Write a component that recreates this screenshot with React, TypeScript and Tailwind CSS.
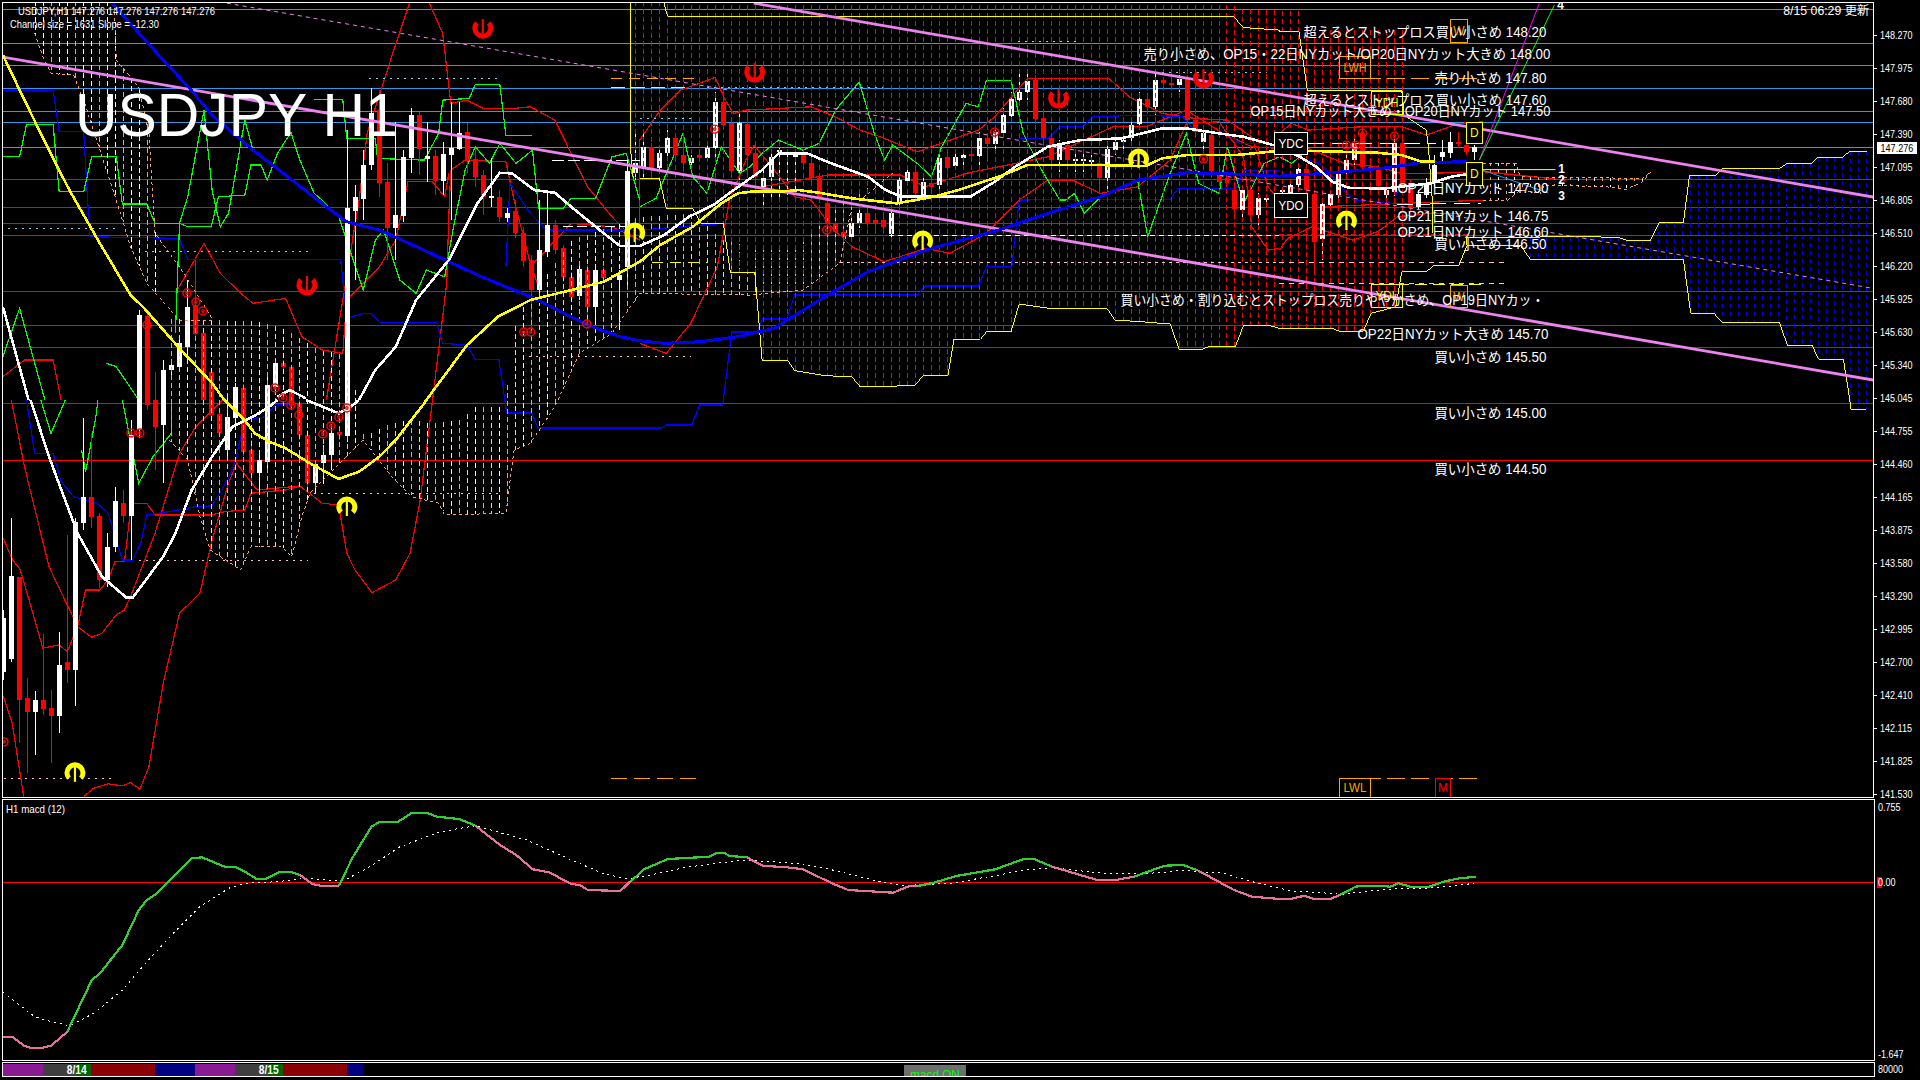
type Pt = number[]

// The chart coordinates were read off 640px wide crops, so convert them to page pixels
const tile = (ox: number, oy: number, s: string): Pt[] =>
    s.trim().split(/\s+/).map((p) => {
        const [a, b] = p.split(',').map(Number)
        return [ox + a / 2.45, oy + b / 3]
    })
const A = (s: string) => tile(0, 0, s)
const B = (s: string) => tile(640, 0, s)
const C = (s: string) => tile(1280, 0, s)
const D = (s: string) => tile(0, 400, s)
const M1 = (s: string) => tile(0, 780, s)
const M2 = (s: string) => tile(640, 780, s)
const M3 = (s: string) => tile(1280, 780, s)

const toPoints = (pts: Pt[]) => pts.map((p) => `${p[0].toFixed(1)},${p[1].toFixed(1)}`).join(' ')

function interp(pts: Pt[], x: number) {
    if (x <= pts[0][0]) return pts[0][1]
    for (let i = 1; i < pts.length; i++) {
        if (x <= pts[i][0]) {
            const [x0, y0] = pts[i - 1]
            const [x1, y1] = pts[i]
            return x1 === x0 ? y1 : y0 + ((y1 - y0) * (x - x0)) / (x1 - x0)
        }
    }
    return pts[pts.length - 1][1]
}

const RED = '#ff0000'
const BLUE = '#0000ff'
const GREEN = '#00ff00'
const YELLOW = '#ffff00'
const VIOLET = '#ee82ee'
const SKY = '#87ceeb'
const ORANGE = '#ffa500'
const SAND = '#f4a460'

const blueLevels = [9, 43, 65, 88, 111, 122]
const redLevels = [179, 207, 223, 235, 291, 325, 347, 403, 460]

const axisPrices = [
    '148.270', '147.975', '147.680', '147.390', '147.095', '146.805', '146.510', '146.220',
    '145.925', '145.630', '145.340', '145.045', '144.755', '144.460', '144.165', '143.875',
    '143.580', '143.290', '142.995', '142.700', '142.410', '142.115', '141.825', '141.530',
]

// k, colour, body top, body bottom, wick top, wick bottom
const candles: [number, string, number, number, number, number][] = [
    [0, 'w', 618, 672, 610, 680], [1, 'w', 576, 659, 518, 662], [2, 'r', 577, 700, 577, 743],
    [3, 'r', 698, 712, 678, 773], [4, 'w', 700, 712, 691, 755], [5, 'r', 700, 709, 634, 715],
    [6, 'r', 708, 716, 690, 763], [7, 'w', 665, 716, 632, 733], [8, 'r', 662, 670, 535, 683],
    [9, 'w', 522, 670, 518, 706], [10, 'w', 497, 523, 418, 530], [11, 'r', 497, 517, 433, 528],
    [12, 'r', 516, 580, 513, 588], [13, 'w', 547, 580, 533, 587], [14, 'w', 501, 547, 487, 552],
    [15, 'r', 503, 516, 490, 523], [16, 'w', 435, 516, 420, 560], [17, 'w', 315, 430, 310, 438],
    [18, 'r', 316, 405, 312, 410], [19, 'r', 400, 427, 372, 470], [20, 'w', 370, 425, 360, 483],
    [21, 'w', 365, 370, 360, 376], [22, 'w', 343, 367, 335, 372], [23, 'w', 307, 347, 280, 355],
    [24, 'r', 305, 334, 260, 340], [25, 'r', 333, 400, 330, 405], [26, 'r', 372, 415, 368, 420],
    [27, 'r', 414, 433, 410, 437], [28, 'w', 417, 450, 395, 460], [29, 'w', 387, 418, 383, 425],
    [30, 'r', 388, 452, 384, 456], [31, 'r', 450, 473, 440, 480], [32, 'w', 460, 473, 450, 490],
    [33, 'w', 385, 462, 375, 470], [34, 'w', 363, 387, 358, 392], [35, 'r', 363, 367, 360, 372],
    [36, 'r', 367, 405, 365, 410], [37, 'r', 403, 435, 400, 440], [38, 'r', 435, 483, 430, 490],
    [39, 'w', 464, 483, 460, 493], [40, 'w', 455, 463, 445, 484], [41, 'w', 433, 455, 428, 470],
    [42, 'r', 432, 435, 428, 440], [43, 'w', 208, 436, 130, 442], [44, 'w', 197, 211, 185, 280],
    [45, 'w', 165, 199, 150, 220], [46, 'w', 113, 165, 88, 170], [47, 'r', 110, 183, 90, 197],
    [48, 'r', 182, 228, 163, 260], [49, 'w', 215, 228, 122, 260], [50, 'w', 157, 216, 150, 222],
    [51, 'w', 115, 158, 108, 173], [52, 'r', 115, 149, 112, 175], [53, 'w', 156, 159, 122, 182],
    [54, 'r', 156, 181, 150, 195], [55, 'w', 154, 181, 142, 195], [56, 'w', 148, 155, 102, 220],
    [57, 'w', 133, 149, 102, 150], [58, 'r', 132, 160, 123, 173], [59, 'r', 159, 177, 148, 187],
    [60, 'r', 175, 197, 170, 215], [61, 'w', 196, 198, 158, 207], [62, 'r', 197, 217, 190, 222],
    [63, 'w', 213, 218, 208, 222], [64, 'r', 211, 233, 200, 238], [65, 'r', 233, 261, 227, 267],
    [66, 'r', 260, 290, 255, 328], [67, 'w', 250, 290, 200, 293], [68, 'w', 225, 252, 193, 257],
    [69, 'r', 225, 250, 220, 254], [70, 'r', 248, 277, 245, 282], [71, 'r', 277, 297, 272, 302],
    [72, 'w', 269, 296, 264, 300], [73, 'r', 270, 307, 265, 328], [74, 'w', 270, 307, 265, 325],
    [75, 'r', 270, 278, 267, 282], [77, 'w', 275, 280, 270, 330], [78, 'w', 171, 267, 160, 290],
    [79, 'w', 163, 173, 130, 180], [80, 'w', 147, 167, 130, 178], [81, 'r', 147, 169, 143, 177],
    [82, 'w', 153, 168, 150, 172], [83, 'w', 138, 153, 130, 157], [84, 'r', 138, 155, 135, 158],
    [85, 'r', 155, 163, 135, 172], [86, 'w', 158, 163, 155, 167], [87, 'r', 155, 158, 150, 162],
    [88, 'w', 148, 158, 142, 162], [89, 'w', 102, 148, 92, 158], [90, 'r', 102, 125, 90, 130],
    [91, 'r', 123, 171, 118, 178], [92, 'w', 123, 171, 113, 180], [93, 'r', 124, 155, 110, 173],
    [94, 'r', 153, 177, 150, 190], [95, 'w', 178, 187, 170, 207], [96, 'w', 157, 177, 150, 197],
    [97, 'w', 150, 152, 148, 200], [98, 'w', 152, 155, 150, 195], [99, 'w', 155, 157, 150, 190],
    [100, 'r', 155, 163, 150, 170], [101, 'r', 163, 178, 160, 182], [102, 'r', 178, 197, 175, 203],
    [103, 'r', 203, 224, 195, 228], [104, 'r', 223, 232, 220, 235], [105, 'r', 232, 237, 228, 240],
    [106, 'w', 223, 237, 215, 240], [107, 'w', 213, 223, 205, 228], [108, 'r', 213, 223, 210, 228],
    [109, 'r', 220, 224, 215, 230], [110, 'r', 220, 227, 212, 232], [111, 'w', 213, 234, 208, 237],
    [112, 'w', 180, 203, 175, 208], [113, 'w', 172, 181, 165, 185], [114, 'r', 172, 193, 168, 197],
    [115, 'w', 182, 195, 178, 200], [116, 'r', 183, 187, 178, 190], [117, 'w', 158, 185, 155, 195],
    [118, 'r', 157, 168, 150, 172], [119, 'w', 157, 166, 152, 170], [120, 'w', 155, 158, 150, 168],
    [121, 'r', 154, 156, 140, 158], [122, 'w', 138, 156, 132, 170], [123, 'r', 138, 144, 135, 160],
    [124, 'w', 132, 144, 125, 150], [125, 'w', 115, 133, 108, 137], [126, 'w', 99, 116, 92, 120],
    [127, 'w', 92, 100, 72, 105], [128, 'w', 81, 92, 72, 100], [129, 'r', 80, 119, 75, 124],
    [130, 'r', 118, 138, 112, 142], [131, 'r', 138, 160, 134, 165], [132, 'w', 145, 160, 140, 172],
    [133, 'r', 145, 160, 142, 170], [134, 'w', 159, 161, 150, 172], [135, 'w', 159, 161, 152, 172],
    [136, 'w', 160, 162, 155, 170], [137, 'r', 163, 178, 160, 190], [138, 'w', 149, 178, 145, 190],
    [139, 'w', 142, 150, 138, 155], [140, 'w', 140, 142, 135, 150], [141, 'w', 125, 138, 120, 142],
    [142, 'w', 99, 124, 92, 130], [143, 'r', 99, 107, 95, 112], [144, 'w', 80, 107, 73, 115],
    [145, 'r', 80, 83, 78, 86], [146, 'r', 83, 85, 80, 88], [147, 'w', 79, 85, 75, 92],
    [148, 'r', 79, 120, 75, 125], [149, 'r', 120, 132, 116, 136], [150, 'w', 133, 142, 125, 150],
    [151, 'r', 135, 171, 130, 175], [152, 'r', 172, 182, 168, 186], [153, 'r', 178, 183, 175, 187],
    [154, 'r', 190, 209, 185, 213], [155, 'w', 190, 210, 186, 217], [156, 'r', 190, 215, 186, 219],
    [157, 'w', 198, 215, 193, 225], [158, 'w', 198, 200, 195, 203], [160, 'w', 190, 192, 187, 195],
    [161, 'w', 185, 197, 180, 201], [162, 'w', 169, 185, 164, 190], [163, 'r', 169, 190, 165, 193],
    [164, 'r', 194, 242, 190, 273], [165, 'w', 204, 239, 200, 260], [166, 'w', 194, 205, 190, 210],
    [167, 'w', 174, 195, 168, 198], [168, 'w', 160, 170, 155, 175], [169, 'w', 143, 160, 138, 165],
    [170, 'r', 133, 167, 128, 170], [171, 'r', 167, 170, 163, 173], [172, 'r', 169, 186, 165, 190],
    [173, 'w', 190, 195, 185, 198], [174, 'w', 143, 192, 138, 196], [175, 'r', 143, 183, 138, 187],
    [176, 'r', 183, 207, 180, 212], [177, 'w', 194, 207, 190, 210], [178, 'w', 183, 195, 178, 198],
    [179, 'w', 165, 183, 155, 187], [180, 'w', 152, 157, 140, 162], [181, 'w', 142, 153, 132, 158],
    [182, 'r', 142, 144, 132, 148], [183, 'r', 145, 152, 142, 155], [184, 'w', 147, 152, 145, 160],
]

// Ichimoku cloud edges
const redTop = [...A('1540,3 1568,3'), ...B('60,3 68,16 1455,16 1478,27 1568,30'), ...C('0,32 48,32 68,90 300,91')]
const redBottom = [
    ...B('0,535 48,535 65,625 130,625 150,670 205,670 222,817 282,817 300,1080 362,1080 380,1112 455,1127 520,1130 540,1160 600,1160 675,1155 695,1127 755,1127 770,1018 835,1018 850,995 910,995 930,912 1005,925 1145,925 1165,960 1230,965 1300,972 1322,1047 1380,1047 1395,1040 1460,1040 1480,975 1540,975 1568,985'),
    ...C('0,985 130,985 145,993 205,993 225,940 285,920 300,815'),
]
const yellowLeft = A('1545,3 1545,440 1552,535')
const yellowTopRed = [...B('58,3 68,48 1455,48 1478,82 1568,90'), ...C('0,95 48,95 68,270 300,272 305,345 360,390 365,440 375,610 375,700')]
const yellowBottomRed = [
    ...B('0,535 48,535 65,625 130,625 150,670 205,670 222,817 282,817 300,1080 362,1080 380,1112 455,1127 520,1130 540,1160 600,1160 675,1155 695,1127 755,1127 770,1018 835,1018 850,995 910,995 930,912 1005,925 1145,925 1165,960 1230,965 1300,972 1322,1047 1380,1047 1395,1040 1460,1040 1480,975 1540,975 1568,985'),
    ...C('0,985 130,985 145,993 205,993 225,940 285,920 300,815 360,815 380,795 440,795 460,735 590,735 615,778 990,778 1008,940 1065,940 1085,967 1225,967 1245,1036 1305,1036 1322,1078 1382,1078 1398,1200'),
    ...tile(1280, 400, '1398,0 1400,28 1438,28'),
]
const yellowTopBlue = C('458,735 458,712 760,710 830,712 850,720 910,720 930,668 990,668 1005,525 1070,525 1085,505 1225,505 1245,490 1305,490 1320,472 1380,472 1398,453 1440,453')
const blueCloudBottom = [...C('590,735 615,778 990,778 1008,940 1065,940 1085,967 1225,967 1245,1036 1305,1036 1322,1078 1382,1078 1398,1200'), ...tile(1280, 400, '1400,28 1438,28')]

const duskTop = A('85,3 280,3 285,180 340,260 365,400 380,700 440,800 520,955')
const duskBottom = A('85,100 105,170 125,220 180,225 205,300 285,600 320,740 360,850 440,960 520,960')
const sandTop = [
    ...A('360,955 520,960 640,965 700,990 780,1050 830,1060 880,1200'),
    ...D('890,110 950,75 1000,60 1060,70 1130,60 1160,20 1235,20'),
    ...A('1265,950 1400,720 1568,650'),
    ...B('0,650 130,640 200,720 280,740 380,740 500,600 620,520'),
]
const sandBottom = [
    ...D('415,120 460,180 490,350 515,450 590,510 615,440 690,440 715,470 740,350 760,280 890,120 915,160 960,230 1010,290 1075,310 1090,345 1240,340 1260,150 1300,130 1360,20'),
    ...A('1420,1060 1500,1000 1568,880'),
    ...B('0,880 270,885 400,870 490,790 520,620 620,520'),
]
const tailTop = C('500,490 580,490 590,530 890,535 910,515')
const tailBottom = C('500,600 560,600 590,570 640,580 650,555 800,560 850,568 890,545 910,515')

const thinRed: Pt[][] = [
    A('1005,3 960,170 900,400 880,600 840,900 800,1200'),
    A('1050,3 1085,100 1105,310 1145,300 1185,325 1260,325 1300,320 1360,360 1440,560 1500,650 1540,700 1568,720'),
    D('28,0 60,200 120,500 190,680 225,712 250,700 285,645 305,630 320,590 380,400 440,160 480,80 545,0'),
    D('8,890 30,970 58,1190'),
    [...D('205,1190 230,1165 265,1152 300,1158 320,1148 343,1168 365,1100 400,850 440,640 490,580 520,420 560,250 580,190 630,270 735,258 790,310 830,315 850,460 870,510 912,578 970,540 1005,460 1030,300 1060,0'), ...A('1060,1200 1095,850 1100,650 1105,510 1140,480 1240,485 1260,600 1300,790 1320,860')],
    A('7,1130 60,1080 130,1080 150,1200'),
    A('430,880 500,730 540,820 590,880 620,910 700,895 740,1010 790,1050 840,1060 850,900 930,800 970,720 1000,545 1060,545 1090,590 1100,520'),
    D('8,415 30,478 50,510 105,745 145,735 165,755 190,680 210,570 245,570 265,540 282,485 305,485 322,310 360,310 380,345 520,345 550,335 600,330 615,280 700,270 735,258'),
    [...A('1300,800 1400,670 1500,680 1568,720'), ...B('0,420 50,330 100,270 185,232 210,300 230,340 260,330 420,320 480,350 540,390 590,410 680,455 830,390 870,350 950,235 1150,235 1200,290 1280,340 1360,355 1440,360 1500,410 1540,560 1568,600')],
    B('0,1030 65,1060 125,970 190,800 220,600 260,480 280,435 330,510 380,590 420,600 470,680 520,740 600,785 700,745 760,760 850,700 930,600 1000,540 1060,540 1130,580 1220,560 1300,480 1340,370 1420,365 1480,470 1500,680 1540,750 1568,745'),
    B('300,560 460,525 640,525 700,560 800,520 1000,470 1160,380 1240,380 1340,330 1430,400 1500,440 1568,445'),
    C('0,400 30,370 70,390 200,380 300,380 360,405 440,370 500,365'),
    C('0,750 20,715 80,680 180,720 240,695 290,650 370,640 450,640'),
    C('100,620 500,600'),
    C('70,445 160,490 240,500 300,520 360,520 500,515 700,540'),
]

const thinBlue: Pt[][] = [
    A('7,270 130,270 145,393 205,393 220,710 440,715 460,778 835,778 850,955 890,940 910,940 930,967 1070,967 1085,1030 1145,1035 1165,1078 1225,1078'),
    [
        [499, 359], [507, 413], [532, 413], [538, 428], [662, 428], [667, 425], [692, 425], [700, 405], [723, 405],
        [732, 332], [757, 332], [763, 319], [787, 319], [795, 295],
        ...B('680,885 700,858 830,858 850,800 912,800 930,600 1040,598 1300,598 1320,565 1460,565 1480,512 1568,512'),
    ],
    D('65,0 85,160 130,160 150,245 180,290 240,310 265,340 300,480 325,480 345,430 360,345 415,335 480,320 520,318 560,235 575,190 600,60 650,50 675,15 720,12'),
    A('1240,800 1250,550 1300,640 1340,690 1540,690'),
    B('0,690 205,670'),
    B('930,415 1000,415 1030,380 1085,380 1110,350 1230,345 1330,350 1360,390 1440,400 1470,430 1530,430'),
    C('70,480 100,490 180,600 280,610 300,530'),
]

const thinGreen: Pt[][] = [
    A('7,470 48,470 65,372 130,372 145,575 205,575 225,468 285,468 300,612 360,612 380,670 440,670 460,680 518,680 535,590 600,585 615,495 640,495 655,540 680,460 713,397 735,480 770,580 785,595 830,650 890,870 920,720 940,690 980,840 1020,880 1045,810 1090,830 1110,690 1140,510 1165,440 1200,490 1225,430 1265,490 1305,450 1320,625 1380,625 1400,595 1460,595 1500,470 1535,460 1568,600'),
    A('430,1000 440,670 460,590 500,330 520,570 540,680 560,640 600,360 620,450'),
    A('770,298 840,298 850,415 920,415 925,475 985,478 1040,480 1075,400 1085,300 1150,295 1165,253 1225,253 1240,405 1305,405'),
    A('7,1070 48,925 110,1200'),
    A('260,1090 285,1100 340,1200'),
    D('100,0 125,100 160,0'),
    D('200,150 210,215 235,50 240,0'),
    D('300,0 340,250 375,170 420,100 420,0'),
    B('0,620 40,595 106,400 130,530 165,580 200,440 245,520 270,500 300,460 340,420 400,450 440,430 480,330 538,245 575,400 600,480 620,435 680,490 715,530 740,440 800,310 830,320 850,240 910,240 940,400 985,510 1030,600 1045,600 1065,580 1090,640 1130,590 1220,540 1245,710 1300,520 1340,400 1370,550 1420,580 1440,440 1480,610 1530,490 1568,470'),
    C('0,470 30,490 70,450 90,450'),
]

const thickYellow = [
    A('7,165 60,300 120,450 170,570 240,720 320,885 350,920 440,1045 520,1150 550,1200'),
    D('550,0 595,55 625,100 660,125 700,145 760,190 830,237 880,215 930,170 970,120 1040,10 1045,0'),
    [...A('1045,1200 1145,1035 1220,950 1300,900 1400,870 1480,845 1568,785'), ...B('0,785 50,735 130,680 200,610 240,580 270,575 340,575 390,570 440,578 520,595 630,610 720,590 780,570 880,530 950,495 1130,495 1240,498 1280,475 1340,465 1460,465 1568,452'), ...C('0,452 70,452 240,458 300,465 350,485 380,485')],
]
const thickBlue = [...A('270,3 400,180 465,265 520,345 620,450 700,525 800,620 850,665 930,690 1030,745 1180,830 1310,895 1440,975 1520,1010 1568,1022'), ...B('0,1022 60,1030 150,1025 240,1010 330,985 460,885 560,815 700,750 880,690 1000,640 1130,590 1220,540 1340,518 1420,520 1568,528'), ...C('0,528 110,520 250,505 350,487 460,485')]
const thickWhite = [
    A('7,920 70,1200'),
    D('75,0 120,170 190,400 250,530 310,593 325,593 400,470 430,400 470,270 520,170 570,80 620,50 660,20 680,0'),
    A('680,1190 710,1170 750,1195'),
    D('750,0 830,40 860,20 880,0'),
    [...A('880,1200 920,1110 970,1040 1020,900 1100,780 1170,610 1225,518 1255,520 1310,570 1360,578 1400,620 1470,690 1520,738 1568,738'), ...B('0,738 60,705 120,650 180,615 230,570 300,510 340,460 410,460 470,490 560,530 600,568 640,590 810,590 870,545 920,500 1000,440 1080,420 1180,415 1280,385 1340,385 1420,400 1480,410 1568,440'), ...C('0,440 50,470 90,500 130,545 170,563 240,565 260,565 370,550 420,530 460,522')],
]

// x1, x2, y, colour, dash
const dashes: [number, number, number, string, string][] = [
    [369, 500, 78, SKY, '2 5'], [8, 116, 228, SKY, '2 5'], [145, 308, 251, SKY, '2 5'],
    [529, 691, 356, '#ffc0cb', '2 5'], [314, 502, 493, '#ffc0cb', '2 5'], [139, 308, 560, '#ffc0cb', '2 5'],
    [4, 116, 778, '#ffc0cb', '2 5'], [1018, 1076, 41, SKY, '2 5'], [640, 691, 118, SKY, '2 5'],
    [707, 883, 87, SKY, '2 5'], [1162, 1268, 72, SKY, '2 5'], [611, 701, 78, ORANGE, '11 7'],
    [611, 685, 87, YELLOW, '14 6'], [889, 1280, 235, '#ffffff', '5 4'], [1280, 1470, 234, RED, '5 3'],
    [840, 1280, 262, '#ffc0cb', '3 4'], [1280, 1506, 262, '#ffc0cb', '5 5'], [652, 707, 262, YELLOW, '11 7'],
    [1280, 1506, 283, '#ffc0cb', '5 5'], [1398, 1483, 284, YELLOW, '12 6'], [611, 701, 778, ORANGE, '16 7'],
    [1340, 1483, 778, ORANGE, '18 6'], [1340, 1483, 78, ORANGE, '18 6'], [1309, 1437, 143, '#ffffff', '16 8'],
    [1431, 1482, 203, '#ffffff', '16 8'], [1398, 1431, 204, '#ffffff', '16 8'], [552, 640, 160, '#ffffff', '12 4'],
    [563, 640, 226, '#ffffff', '10 4'],
]

const redShoes = [[483, 28], [307, 285], [755, 72], [1059, 98], [1204, 78]]
const yellowShoes = [[75, 773], [347, 507], [923, 241], [1139, 159], [1347, 221], [635, 233]]
const rings = [
    [187, 293], [196, 302], [203, 311], [147, 325], [275, 388], [283, 398], [524, 332], [531, 332],
    [587, 324], [131, 433], [140, 433], [323, 434], [331, 426], [339, 417], [347, 408], [291, 405],
    [299, 415], [4, 742], [715, 129], [827, 230], [995, 132], [1204, 159], [1347, 145], [1356, 145],
    [1363, 133], [1395, 136],
]

// text, left, right, baseline
const notes: [string, number, number, number][] = [
    ['超えるとストップロス買い小さめ 148.20', 1304, 1547, 37],
    ['売り小さめ、OP15・22日NYカット/OP20日NYカット大きめ 148.00', 1144, 1551, 59],
    ['売り小さめ 147.80', 1435, 1547, 83],
    ['超えるとストップロス買い小さめ 147.60', 1304, 1547, 105],
    ['OP15日NYカット大きめ・OP20日NYカット 147.50', 1251, 1551, 116],
    ['OP21日NYカット 147.00', 1398, 1549, 193],
    ['OP21日NYカット 146.75', 1398, 1549, 221],
    ['OP21日NYカット 146.60', 1398, 1549, 237],
    ['買い小さめ 146.50', 1435, 1547, 249],
    ['買い小さめ・割り込むとストップロス売りややかさめ、OP19日NYカッ・', 1121, 1545, 305],
    ['OP22日NYカット大きめ 145.70', 1358, 1549, 339],
    ['買い小さめ 145.50', 1435, 1547, 362],
    ['買い小さめ 145.00', 1435, 1547, 418],
    ['買い小さめ 144.50', 1435, 1547, 474],
]

// text, x, y, w, h, colour
const boxes: [string, number, number, number, number, string][] = [
    ['W', 1451, 19, 17, 23, ORANGE], ['LWH', 1340, 56, 31, 22, ORANGE], ['YDH', 1372, 91, 31, 23, YELLOW],
    ['D', 1467, 122, 16, 21, YELLOW], ['D', 1467, 162, 16, 23, YELLOW], ['YDC', 1275, 132, 33, 22, '#ffffff'],
    ['YDO', 1275, 193, 33, 24, '#ffffff'], ['YDL', 1372, 284, 31, 23, YELLOW], ['W', 1451, 285, 17, 22, ORANGE],
    ['LWL', 1340, 778, 31, 19, ORANGE], ['M', 1436, 778, 15, 19, RED],
]

const macdPink = [
    M1('7,770 30,770 60,798 75,803 105,803 125,797 165,755'),
    M1('735,285 765,312 785,317 830,317'),
    M1('1165,137 1225,195 1265,225 1305,268 1345,277 1400,312 1420,315 1440,330 1520,333 1545,303'),
    M2('262,232 300,257 360,262 400,268 470,310 510,330 620,338 660,318 680,318'),
    M2('1010,260 1120,300 1165,300 1210,290'),
    [...M2('1365,270 1455,330 1500,350 1568,357'), ...M3('0,357 25,357 60,347 80,356 125,356 147,345')],
]
const macdGreen = [
    M1('165,755 225,600 245,580 300,495 340,390 360,360 385,340 470,235 495,232 550,260 575,260 600,275 630,298 650,298 685,275 710,275 735,285'),
    M1('830,317 865,230 910,140 930,125 975,125 1010,98 1045,98 1070,110 1125,117 1165,137'),
    [...M1('1545,303 1568,280'), ...M2('0,280 10,268 68,237 170,230 190,218 205,218 220,228 262,232')],
    M2('680,318 720,308 775,288 870,268 940,237 965,237 1010,260'),
    M2('1210,290 1285,257 1330,255 1365,270'),
    M3('147,345 185,320 210,317 245,317 270,320 290,310 320,320 365,320 400,305 440,295 480,290'),
]
const macdSignal = [
    ...M1('7,637 85,710 110,720 170,737 230,700 300,630 360,545 440,440 490,380 560,325 600,310 680,305 750,295 840,303 900,265 980,200 1080,155 1165,137 1290,180 1400,240 1480,282 1540,297 1568,290'),
    ...M2('0,292 100,265 170,252 260,240 400,252 480,272 580,303 640,317 760,310 880,285 940,270 1010,263 1150,282 1290,278 1320,270 1430,280 1500,305 1568,325'),
    ...M3('0,325 30,333 100,338 150,343 230,332 290,325 360,325 425,318 475,310'),
]

function Path({ pts, color, w = 1, dash }: { pts: Pt[]; color: string; w?: number; dash?: string }) {
    return <polyline points={toPoints(pts)} fill="none" stroke={color} strokeWidth={w} strokeDasharray={dash} shapeRendering="crispEdges" />
}

function Hatch({ top, bottom, from, to, colors, dash = '5 3' }: { top: Pt[]; bottom: Pt[]; from: number; to: number; colors: string[]; dash?: string }) {
    const xs: number[] = []
    for (let x = from; x <= to; x += 8) xs.push(x)
    return (
        <g shapeRendering="crispEdges" strokeDasharray={dash}>
            {xs.map((x, i) => {
                const y1 = interp(top, x)
                const y2 = interp(bottom, x)
                if (y2 <= y1) return null
                return <line key={x} x1={x + 0.5} x2={x + 0.5} y1={y1} y2={y2} stroke={colors[i % colors.length]} />
            })}
        </g>
    )
}

// The arrow-in-horseshoe marks, red ones open upward and yellow ones downward
function Shoe({ x, y, color, flip }: { x: number; y: number; color: string; flip?: boolean }) {
    return (
        <g transform={`translate(${x} ${y}) scale(1 ${flip ? -1 : 1})`} fill="none" stroke={color}>
            <path d="M-6,-5.3 A8,8 0 1,0 6,-5.3" strokeWidth={5} />
            <path d="M0,10 L0,-9" strokeWidth={2.2} />
        </g>
    )
}

function PriceChart() {
    return (
        <svg viewBox="3 3 1871 794" className="block w-full h-full font-['Liberation_Sans','Noto_Sans_CJK_JP',sans-serif]">
            {/* Level lines */}
            <g shapeRendering="crispEdges">
                {blueLevels.map((y) => <line key={y} x1={3} x2={1874} y1={y + 0.5} y2={y + 0.5} stroke="#3399e6" />)}
                <line x1={3} x2={1874} y1={147.5} y2={147.5} stroke="#778899" />
                {redLevels.map((y) => <line key={y} x1={3} x2={1874} y1={y + 0.5} y2={y + 0.5} stroke={RED} />)}
            </g>

            {thinRed.map((p, i) => <Path key={i} pts={p} color={RED} w={1.2} />)}
            {thinBlue.map((p, i) => <Path key={i} pts={p} color={BLUE} w={1.2} />)}
            {thinGreen.map((p, i) => <Path key={i} pts={p} color={GREEN} w={1.2} />)}

            {/* Candles */}
            <g shapeRendering="crispEdges">
                {candles.map(([k, c, top, bot, wt, wb]) => {
                    const x = 3 + 8 * k
                    const fill = c === 'r' ? RED : '#ffffff'
                    return (
                        <g key={k} fill={fill}>
                            <rect x={x} y={wt} width={1} height={wb - wt} />
                            <rect x={x - 2} y={top} width={5} height={Math.max(bot - top, 1)} />
                        </g>
                    )
                })}
            </g>

            {/* Cloud hatching */}
            <Hatch top={duskTop} bottom={duskBottom} from={35} to={155} colors={['#ffffff', '#ffffff', SAND]} />
            <Hatch top={sandTop} bottom={sandBottom} from={171} to={627} colors={[SAND, '#ffc9a0', '#ffe4e1']} />
            <Hatch top={sandTop} bottom={sandBottom} from={635} to={891} colors={[SAND, '#ffc9a0']} />
            <Hatch top={redTop} bottom={redBottom} from={635} to={1403} colors={[RED]} />
            <Hatch top={yellowTopBlue} bottom={blueCloudBottom} from={1531} to={1867} colors={[BLUE]} dash="4 4" />
            <Hatch top={tailTop} bottom={tailBottom} from={1491} to={1651} colors={[SAND, '#ffffff']} dash="3 4" />
            <Path pts={duskTop} color={SAND} dash="3 3" />
            <Path pts={duskBottom} color={SAND} dash="3 3" />
            <Path pts={sandBottom} color={SAND} dash="3 3" />
            <Path pts={tailTop} color={SAND} dash="3 3" />
            <Path pts={tailBottom} color={SAND} dash="3 3" />

            <Path pts={yellowLeft} color={YELLOW} />
            <Path pts={yellowTopRed} color={YELLOW} />
            <Path pts={yellowBottomRed} color={YELLOW} />
            <Path pts={yellowTopBlue} color={YELLOW} />

            {dashes.map(([x1, x2, y, color, dash], i) => (
                <line key={i} x1={x1} x2={x2} y1={y + 0.5} y2={y + 0.5} stroke={color} strokeDasharray={dash} shapeRendering="crispEdges" />
            ))}

            {/* Channel */}
            <line x1={3} x2={1874} y1={57} y2={380} stroke={VIOLET} strokeWidth={2.8} />
            <line x1={754} x2={1874} y1={3} y2={197} stroke={VIOLET} strokeWidth={2.8} />
            <line x1={227} x2={1872} y1={3} y2={288} stroke={VIOLET} strokeDasharray="4 4" />

            {/* Moving averages */}
            <Path pts={thickBlue} color={BLUE} w={3} />
            {thickWhite.map((p, i) => <Path key={i} pts={p} color="#ffffff" w={2.6} />)}
            {thickYellow.map((p, i) => <Path key={i} pts={p} color={YELLOW} w={2.6} />)}

            {/* Pivot projection */}
            <line x1={1483} x2={1556} y1={169.5} y2={169.5} stroke={YELLOW} />
            <line x1={1483} x2={1566} y1={171} y2={180} stroke={RED} />
            <line x1={1483} x2={1549} y1={170} y2={193} stroke="#3399e6" />
            <line x1={1480} x2={1540} y1={160} y2={3} stroke="#ff00ff" />
            <line x1={1480} x2={1555} y1={160} y2={5} stroke={GREEN} />

            {rings.map(([x, y]) => (
                <g key={`${x}-${y}`} fill="none" stroke={RED} strokeWidth={1.4}>
                    <circle cx={x} cy={y} r={4} />
                    <circle cx={x} cy={y} r={1.2} />
                </g>
            ))}
            {redShoes.map(([x, y]) => <Shoe key={x} x={x} y={y} color={RED} />)}
            {yellowShoes.map(([x, y]) => <Shoe key={x} x={x} y={y} color={YELLOW} flip />)}

            {boxes.map(([label, x, y, w, h, color]) => (
                <g key={`${label}-${y}`}>
                    <rect x={x + 0.5} y={y + 0.5} width={w} height={h} fill={label === 'W' || label === 'LWH' || label === 'YDH' || label === 'YDL' ? 'none' : '#000000'} stroke={color} shapeRendering="crispEdges" />
                    <text x={x + w / 2} y={y + h / 2 + 4.5} textAnchor="middle" fontSize={12} fill={color} textLength={label.length > 1 ? w - 8 : undefined} lengthAdjust="spacingAndGlyphs">{label}</text>
                </g>
            ))}

            {/* Order notes */}
            {notes.map(([label, x1, x2, y]) => (
                <text key={label} x={x1} y={y} fontSize={14} fill="#ffffff" textLength={x2 - x1} lengthAdjust="spacingAndGlyphs">{label}</text>
            ))}

            <text x={1559} y={173} fontSize={12} fontWeight={700} fill="#ffffff">1</text>
            <text x={1559} y={184} fontSize={12} fontWeight={700} fill="#ffffff">2</text>
            <text x={1559} y={200} fontSize={12} fontWeight={700} fill="#ffffff">3</text>
            <text x={1558} y={9} fontSize={12} fontWeight={700} fill="#ffffff">4</text>

            <text x={75} y={136} fontSize={61} fill="#ffffff" textLength={323} lengthAdjust="spacingAndGlyphs">USDJPY H1</text>
            <text x={18} y={15} fontSize={11} fill="#ffffff" textLength={197} lengthAdjust="spacingAndGlyphs">USDJPY,H1  147.276 147.276 147.276 147.276</text>
            <text x={10} y={28} fontSize={11} fill="#ffffff" textLength={149} lengthAdjust="spacingAndGlyphs">Channel size = 1631 Slope = -12.30</text>
            <text x={1784} y={15} fontSize={12} fill="#ffffff" textLength={86} lengthAdjust="spacingAndGlyphs">8/15 06:29 更新</text>
        </svg>
    )
}

function MacdChart() {
    return (
        <svg viewBox="3 800 1871 260" className="block w-full h-full font-['Liberation_Sans',sans-serif]">
            <line x1={3} x2={1874} y1={882.5} y2={882.5} stroke={RED} shapeRendering="crispEdges" />
            <Path pts={macdSignal} color="#ffffff" dash="2 4" />
            {macdPink.map((p, i) => <Path key={i} pts={p} color="#e8709f" w={2.2} />)}
            {macdGreen.map((p, i) => <Path key={i} pts={p} color="#32cd32" w={2.2} />)}
            <text x={6} y={813} fontSize={11} fill="#ffffff" textLength={59} lengthAdjust="spacingAndGlyphs">H1  macd (12)</text>
        </svg>
    )
}

function AxisText({ children }: { children: string }) {
    return <span className="text-[11px] leading-none text-white origin-left scale-x-[0.82] whitespace-nowrap">{children}</span>
}

export default function App() {
    return (
        <div className="relative w-[1920px] h-[1080px] bg-black pt-[2px] pl-[2px] flex flex-col gap-[1px] overflow-hidden font-['Liberation_Sans',sans-serif]">
            {/* Price panel */}
            <div className="flex h-[796px]">
                <div className="w-[1873px] border border-white">
                    <PriceChart />
                </div>
                <div className="flex flex-col pt-[17px]">
                    {axisPrices.map((price) => (
                        <div key={price} className="flex items-center shrink-0 h-[33px] gap-[3px]">
                            <div className="w-[3px] h-px bg-white" />
                            <AxisText>{price}</AxisText>
                        </div>
                    ))}
                </div>
            </div>

            {/* Current price tag */}
            <div className="absolute left-[1877px] top-[142px] w-[40px] h-[12px] bg-white flex items-center justify-center">
                <span className="text-[11px] leading-none text-black scale-x-[0.82]">147.276</span>
            </div>

            {/* MACD panel */}
            <div className="flex h-[262px]">
                <div className="w-[1873px] border border-white">
                    <MacdChart />
                </div>
                <div className="flex flex-col pt-[2px] pl-[3px]">
                    <div className="h-[12px] flex items-center"><AxisText>0.755</AxisText></div>
                    <div className="relative h-[12px] mt-[63px] flex items-center">
                        <div className="absolute left-[-1px] top-[1px] w-[5px] h-[11px] bg-[#ff0000]" />
                        <div className="relative flex items-center"><AxisText>0.00</AxisText></div>
                    </div>
                    <div className="h-[12px] mt-[160px] flex items-center"><AxisText>-1.647</AxisText></div>
                </div>
            </div>

            {/* Session strip */}
            <div className="flex h-[15px]">
                <div className="w-[1873px] border-t border-b border-l border-r border-white pt-px flex items-stretch overflow-hidden">
                    <div className="w-[40px] bg-[#8a1a94]" />
                    <div className="w-[32px] bg-[#3f3f3f] flex items-center justify-end">
                        <span className="text-[12px] leading-none font-bold text-white translate-x-[13px] scale-x-[0.85] z-10">8/14</span>
                    </div>
                    <div className="w-[16px] bg-[#006400]" />
                    <div className="w-[64px] bg-[#8b0000]" />
                    <div className="w-[40px] bg-[#000080]" />
                    <div className="w-[40px] bg-[#8a1a94]" />
                    <div className="w-[32px] bg-[#3f3f3f] flex items-center justify-end">
                        <span className="text-[12px] leading-none font-bold text-white translate-x-[13px] scale-x-[0.85] z-10">8/15</span>
                    </div>
                    <div className="w-[16px] bg-[#006400]" />
                    <div className="w-[64px] bg-[#8b0000]" />
                    <div className="w-[16px] bg-[#000080]" />
                    <div className="ml-[541px] mt-px w-[62px] bg-[#6e6e6e] text-center overflow-hidden">
                        <span className="block mt-[3px] text-[13px] leading-none text-[#00ff00] whitespace-nowrap scale-x-[0.9]">macd ON</span>
                    </div>
                </div>
                <div className="pl-[3px] flex items-center"><AxisText>80000</AxisText></div>
            </div>
        </div>
    )
}
